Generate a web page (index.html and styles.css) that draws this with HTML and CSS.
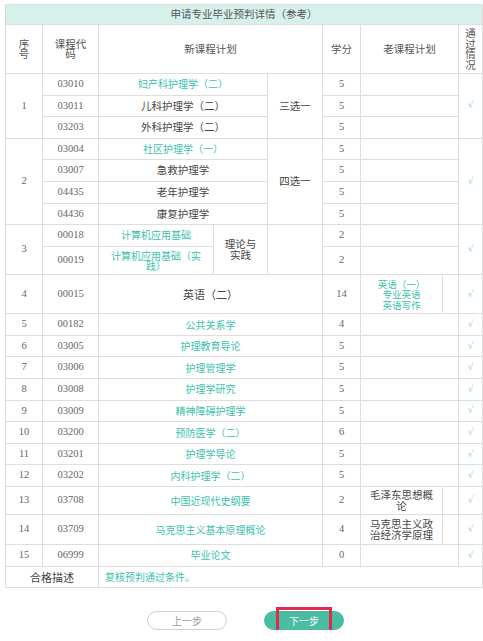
FILE: index.html
```html
<!DOCTYPE html>
<html lang="zh">
<head>
<meta charset="utf-8">
<title>申请专业毕业预判详情</title>
<link rel="stylesheet" href="styles.css">
</head>
<body>
<div class="page">
<table class="grid">
  <colgroup>
    <col class="c-no"><col class="c-code"><col class="c-name"><col class="c-sub"><col class="c-choice"><col class="c-credit"><col class="c-old"><col class="c-oldpad"><col class="c-pass">
  </colgroup>
  <tr class="r-title"><td colspan="9" class="title">申请专业毕业预判详情（参考）</td></tr>
  <tr class="r-head">
    <th>序号</th><th>课程代码</th><th colspan="3">新课程计划</th><th class="credit-h">学分</th><th colspan="2">老课程计划</th><th class="pass-h">通过情况</th>
  </tr>

  <tr class="r"><td rowspan="3">1</td><td>03010</td><td colspan="2" class="hl">妇产科护理学（二）</td><td rowspan="3" class="cn">三选一</td><td>5</td><td colspan="2"></td><td rowspan="3" class="ok">√</td></tr>
  <tr class="r"><td>03011</td><td colspan="2" class="cn">儿科护理学（二）</td><td>5</td><td colspan="2"></td></tr>
  <tr class="r"><td>03203</td><td colspan="2" class="cn">外科护理学（二）</td><td>5</td><td colspan="2"></td></tr>

  <tr class="r"><td rowspan="4">2</td><td>03004</td><td colspan="2" class="hl">社区护理学（一）</td><td rowspan="4" class="cn">四选一</td><td>5</td><td colspan="2"></td><td rowspan="4" class="ok">√</td></tr>
  <tr class="r"><td>03007</td><td colspan="2" class="cn">急救护理学</td><td>5</td><td colspan="2"></td></tr>
  <tr class="r"><td>04435</td><td colspan="2" class="cn">老年护理学</td><td>5</td><td colspan="2"></td></tr>
  <tr class="r"><td>04436</td><td colspan="2" class="cn">康复护理学</td><td>5</td><td colspan="2"></td></tr>

  <tr class="r"><td rowspan="2">3</td><td>00018</td><td class="hl">计算机应用基础</td><td rowspan="2" class="cn">理论与实践</td><td rowspan="2"></td><td>2</td><td colspan="2"></td><td rowspan="2" class="ok">√</td></tr>
  <tr class="r-wrap"><td>00019</td><td class="hl">计算机应用基础（实践）</td><td>2</td><td colspan="2"></td></tr>

  <tr class="r-eng"><td>4</td><td>00015</td><td colspan="3" class="cn big">英语（二）</td><td>14</td><td class="hl small">英语（一）<br>专业英语<br>英语写作</td><td></td><td class="ok">√</td></tr>

  <tr class="r"><td>5</td><td>00182</td><td colspan="3" class="hl">公共关系学</td><td>4</td><td colspan="2"></td><td class="ok">√</td></tr>
  <tr class="r"><td>6</td><td>03005</td><td colspan="3" class="hl">护理教育导论</td><td>5</td><td colspan="2"></td><td class="ok">√</td></tr>
  <tr class="r"><td>7</td><td>03006</td><td colspan="3" class="hl">护理管理学</td><td>5</td><td colspan="2"></td><td class="ok">√</td></tr>
  <tr class="r"><td>8</td><td>03008</td><td colspan="3" class="hl">护理学研究</td><td>5</td><td colspan="2"></td><td class="ok">√</td></tr>
  <tr class="r"><td>9</td><td>03009</td><td colspan="3" class="hl">精神障碍护理学</td><td>5</td><td colspan="2"></td><td class="ok">√</td></tr>
  <tr class="r"><td>10</td><td>03200</td><td colspan="3" class="hl">预防医学（二）</td><td>6</td><td colspan="2"></td><td class="ok">√</td></tr>
  <tr class="r"><td>11</td><td>03201</td><td colspan="3" class="hl">护理学导论</td><td>5</td><td colspan="2"></td><td class="ok">√</td></tr>
  <tr class="r"><td>12</td><td>03202</td><td colspan="3" class="hl">内科护理学（二）</td><td>5</td><td colspan="2"></td><td class="ok">√</td></tr>
  <tr class="r-13"><td>13</td><td>03708</td><td colspan="3" class="hl">中国近现代史纲要</td><td>2</td><td class="cn">毛泽东思想概论</td><td></td><td class="ok">√</td></tr>
  <tr class="r-14"><td>14</td><td>03709</td><td colspan="3" class="hl">马克思主义基本原理概论</td><td>4</td><td class="cn">马克思主义政治经济学原理</td><td></td><td class="ok">√</td></tr>
  <tr class="r"><td>15</td><td>06999</td><td colspan="3" class="hl">毕业论文</td><td>0</td><td colspan="2"></td><td class="ok">√</td></tr>
  <tr class="r"><td colspan="2" class="cn big">合格描述</td><td colspan="7" class="hl left">复核预判通过条件。</td></tr>
</table>

<div class="actions">
  <button class="btn btn-prev" type="button">上一步</button>
  <button class="btn btn-next" type="button">下一步<span class="mark"></span></button>
</div>
</div>
</body>
</html>
```

FILE: styles.css
```css
* { box-sizing: border-box; }

body {
  margin: 0;
  background: #fff;
  font-family: "Liberation Serif", "Noto Sans CJK SC", serif;
  color: #666;
}

.page {
  padding: 4px 0 0 5px;
  width: 483px;
}

.grid {
  border-collapse: collapse;
  table-layout: fixed;
  width: 477px;
  font-size: 10.5px;
  line-height: 1;
}

.c-no { width: 37px; }
.c-code { width: 56px; }
.c-name { width: 115px; }
.c-sub { width: 54px; }
.c-choice { width: 55px; }
.c-credit { width: 38px; }
.c-old { width: 82px; }
.c-oldpad { width: 16px; }
.c-pass { width: 24px; }

.grid td,
.grid th {
  border: 1px solid #dedede;
  text-align: center;
  vertical-align: middle;
  padding: 0 6px;
  font-weight: normal;
}

.grid th {
  font-family: "Noto Sans CJK SC", sans-serif;
  color: #555;
  padding: 0 9px;
  line-height: 10.5px;
}

.grid th.credit-h { padding: 0 3px; }
.grid th.pass-h { padding: 0 5px; }

.r-title td { height: 20px; }
.r-head th { height: 49px; }
.r td { height: 21.6px; }
.r-wrap td { height: 28.5px; }
.r-eng td { height: 39px; }
.r-13 td { height: 28px; }
.r-14 td { height: 30px; }

.title {
  background: #d6f1ec;
  font-family: "Noto Sans CJK SC", sans-serif;
  color: #555;
}

.cn {
  font-family: "Noto Sans CJK SC", sans-serif;
  color: #444;
  font-size: 10.5px;
  line-height: 10.5px;
}

.big { font-size: 11px; }

.hl {
  font-family: "Noto Sans CJK SC", sans-serif;
  color: #3dbfae;
  font-size: 10px;
  line-height: 10px;
}

.small { font-size: 9.5px; line-height: 10.5px; }

.left { text-align: left !important; }

.ok {
  color: #8fd8c8;
  font-family: "DejaVu Sans", sans-serif;
  font-size: 9px;
}

.actions {
  display: flex;
  justify-content: center;
  gap: 37px;
  margin-top: 23px;
  width: 481px;
}

.btn {
  position: relative;
  width: 80px;
  height: 19px;
  border-radius: 10px;
  font-family: "Noto Sans CJK SC", sans-serif;
  font-size: 10px;
  line-height: 17px;
  padding: 0;
  cursor: pointer;
}

.btn-prev {
  background: #fff;
  border: 1px solid #cfcfcf;
  color: #9a9a9a;
}

.btn-next {
  background: #4bbca4;
  border: 1px solid #4bbca4;
  color: #fff;
}

.mark {
  position: absolute;
  left: 11px;
  top: -5px;
  width: 56px;
  height: 27px;
  border: 3px solid #e5294b;
}
```
